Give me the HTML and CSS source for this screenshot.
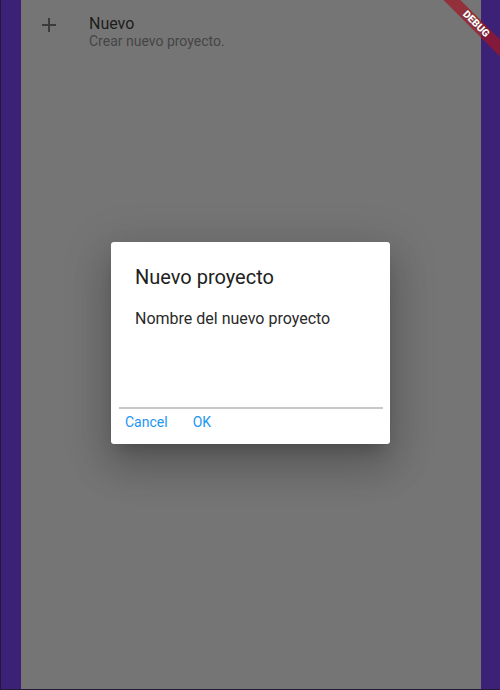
FILE: index.html
```html
<!DOCTYPE html>
<html lang="es">
<head>
<meta charset="utf-8">
<title>Nuevo proyecto</title>
<link rel="stylesheet" href="styles.css">
</head>
<body>
<div class="screen">
  <div class="strip strip-left"></div>
  <main class="panel">
    <div class="tile">
      <svg class="tile-icon" width="24" height="24" viewBox="0 0 24 24" aria-hidden="true">
        <path d="M19 13h-6v6h-2v-6H5v-2h6V5h2v6h6v2z" fill="currentColor"/>
      </svg>
      <div class="tile-text">
        <div class="tile-title">Nuevo</div>
        <div class="tile-sub">Crear nuevo proyecto.</div>
      </div>
    </div>
    <div class="overlay">
      <div class="dialog">
        <div class="dialog-title">Nuevo proyecto</div>
        <div class="dialog-body">Nombre del nuevo proyecto</div>
        <div class="field"></div>
        <div class="actions">
          <span class="btn">Cancel</span>
          <span class="btn">OK</span>
        </div>
      </div>
    </div>
  </main>
  <div class="strip strip-right"></div>
  <div class="banner"><span>DEBUG</span></div>
</div>
</body>
</html>
```
FILE: styles.css
```css
html, body {
  margin: 0;
  padding: 0;
}
body {
  width: 500px;
  height: 690px;
  overflow: hidden;
  font-family: Roboto, "Noto Sans", sans-serif;
  background: #3b2276;
}
.screen {
  position: relative;
  display: flex;
  width: 500px;
  height: 689px;
  border-bottom: 1px solid #221a38;
  overflow: hidden;
}
.strip {
  background: #3b2276;
  flex: none;
}
.strip-left {
  width: 20px;
  border-left: 1px solid #221a38;
}
.strip-right {
  width: 19px;
}
.panel {
  position: relative;
  width: 460px;
  flex: none;
  background: #757575;
}
.tile {
  display: flex;
  align-items: flex-start;
  padding: 13px 0 0 16px;
}
.tile-icon {
  color: #3c3c3c;
  flex: none;
  display: block;
}
.tile-text {
  margin-left: 28px;
  padding-top: 2px;
}
.tile-title {
  font-size: 16px;
  line-height: 18px;
  color: #1c1c1c;
}
.tile-sub {
  font-size: 14px;
  line-height: 16px;
  color: #454545;
}
.overlay {
  position: absolute;
  inset: 0;
  display: flex;
  justify-content: flex-start;
  align-items: flex-start;
  padding: 242px 0 0 90px;
}
.dialog {
  width: 279px;
  height: 202px;
  box-sizing: border-box;
  background: #fff;
  border-radius: 3px;
  padding: 23px 0 0;
  box-shadow: 0 11px 15px -7px rgba(0,0,0,.2), 0 24px 38px 3px rgba(0,0,0,.14), 0 9px 46px 8px rgba(0,0,0,.12);
}
.dialog-title {
  font-size: 20px;
  line-height: 24px;
  color: #212121;
  padding: 0 24px;
}
.dialog-body {
  margin-top: 20px;
  font-size: 16px;
  line-height: 20px;
  color: #2a2a2a;
  padding: 0 24px;
}
.field {
  margin: 78px 7px 0 8px;
  border-bottom: 2px solid #c8c8c8;
}
.actions {
  display: flex;
  gap: 25px;
  padding: 5px 0 0 14px;
}
.btn {
  font-size: 14px;
  line-height: 16px;
  color: #2196f3;
}
.banner {
  position: absolute;
  left: 460px;
  top: 28px;
  width: 80px;
  height: 12px;
  transform-origin: 40px -28px;
  transform: rotate(45deg);
  background: rgba(160, 24, 36, 0.72);
  display: flex;
  align-items: center;
  justify-content: center;
}
.banner span {
  font-family: Roboto, "DejaVu Sans", sans-serif;
  font-size: 10.2px;
  font-weight: 900;
  line-height: 1;
  color: #fff;
  text-shadow: 0 0 2px rgba(0,0,0,.3);
}
```
